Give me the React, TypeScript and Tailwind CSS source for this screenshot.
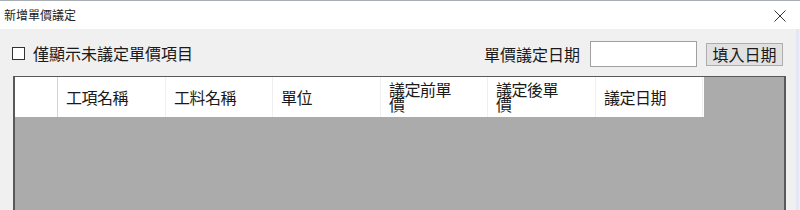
export default function App() {
  const cols = [
    { label: "工項名稱", w: "w-[108px]" },
    { label: "工料名稱", w: "w-[107px]" },
    { label: "單位", w: "w-[108px]" },
    { label: "議定前單價", w: "w-[107px]" },
    { label: "議定後單價", w: "w-[108px]" },
    { label: "議定日期", w: "w-[107px]" },
  ];

  return (
    <div className="w-[800px] h-[210px] overflow-hidden bg-[#f0f0f0] border-t border-[#a9adb5] font-['Noto_Sans_CJK_TC',sans-serif] text-[#1a1a1a]">
      {/* title bar */}
      <div className="h-[28px] bg-white flex items-center justify-between pl-[4px] pr-[14px]">
        <span className="text-[12px] leading-none text-[#222]">新增單價議定</span>
        <svg width="12" height="12" viewBox="0 0 12 12" className="mt-[1px]">
          <path d="M0.5 0.5 L11.5 11.5 M11.5 0.5 L0.5 11.5" stroke="#333" strokeWidth="1" />
        </svg>
      </div>

      <div className="flex">
        <div className="flex-1 pl-[12px]">
          {/* toolbar */}
          <div className="flex items-center h-[26px] mt-[12px] pr-[13px]">
            <div className="flex items-center gap-[8px] self-start mt-[4px]">
              <div className="w-[13px] h-[13px] border border-[#333] bg-white" />
              <span className="text-[16px] leading-[16px]">僅顯示未議定單價項目</span>
            </div>
            <div className="flex-1" />
            <span className="text-[16px] leading-[16px] mr-[10px]">單價議定日期</span>
            <div className="w-[107px] h-[26px] bg-white border border-[#a0a0a0]" />
            <button className="ml-[9px] w-[77px] h-[23px] bg-[#e1e1e1] border border-[#adadad] text-[16px] leading-[16px] text-[#1a1a1a] flex items-center justify-center">
              填入日期
            </button>
          </div>

          {/* grid */}
          <div className="mt-[9px] ml-[1px] h-[140px] w-[773px] bg-[#ababab] border-t border-l-2 border-r-2 border-[#595959]">
            <div className="flex h-[40px] w-[689px] bg-white">
              <div className="w-[43px] border-r border-[#d4d4d4]" />
              {cols.map((c) => (
                <div
                  key={c.label}
                  className={`${c.w} flex items-center pl-[8px] pr-[2px] border-r border-[#efefef] text-[16px] leading-[15px] tracking-[-0.5px]`}
                >
                  <span className="block w-[72px]">{c.label}</span>
                </div>
              ))}
            </div>
          </div>
        </div>
        <div className="w-[3px] bg-[#e4e6f4] mr-[1px]" />
      </div>
    </div>
  );
}
